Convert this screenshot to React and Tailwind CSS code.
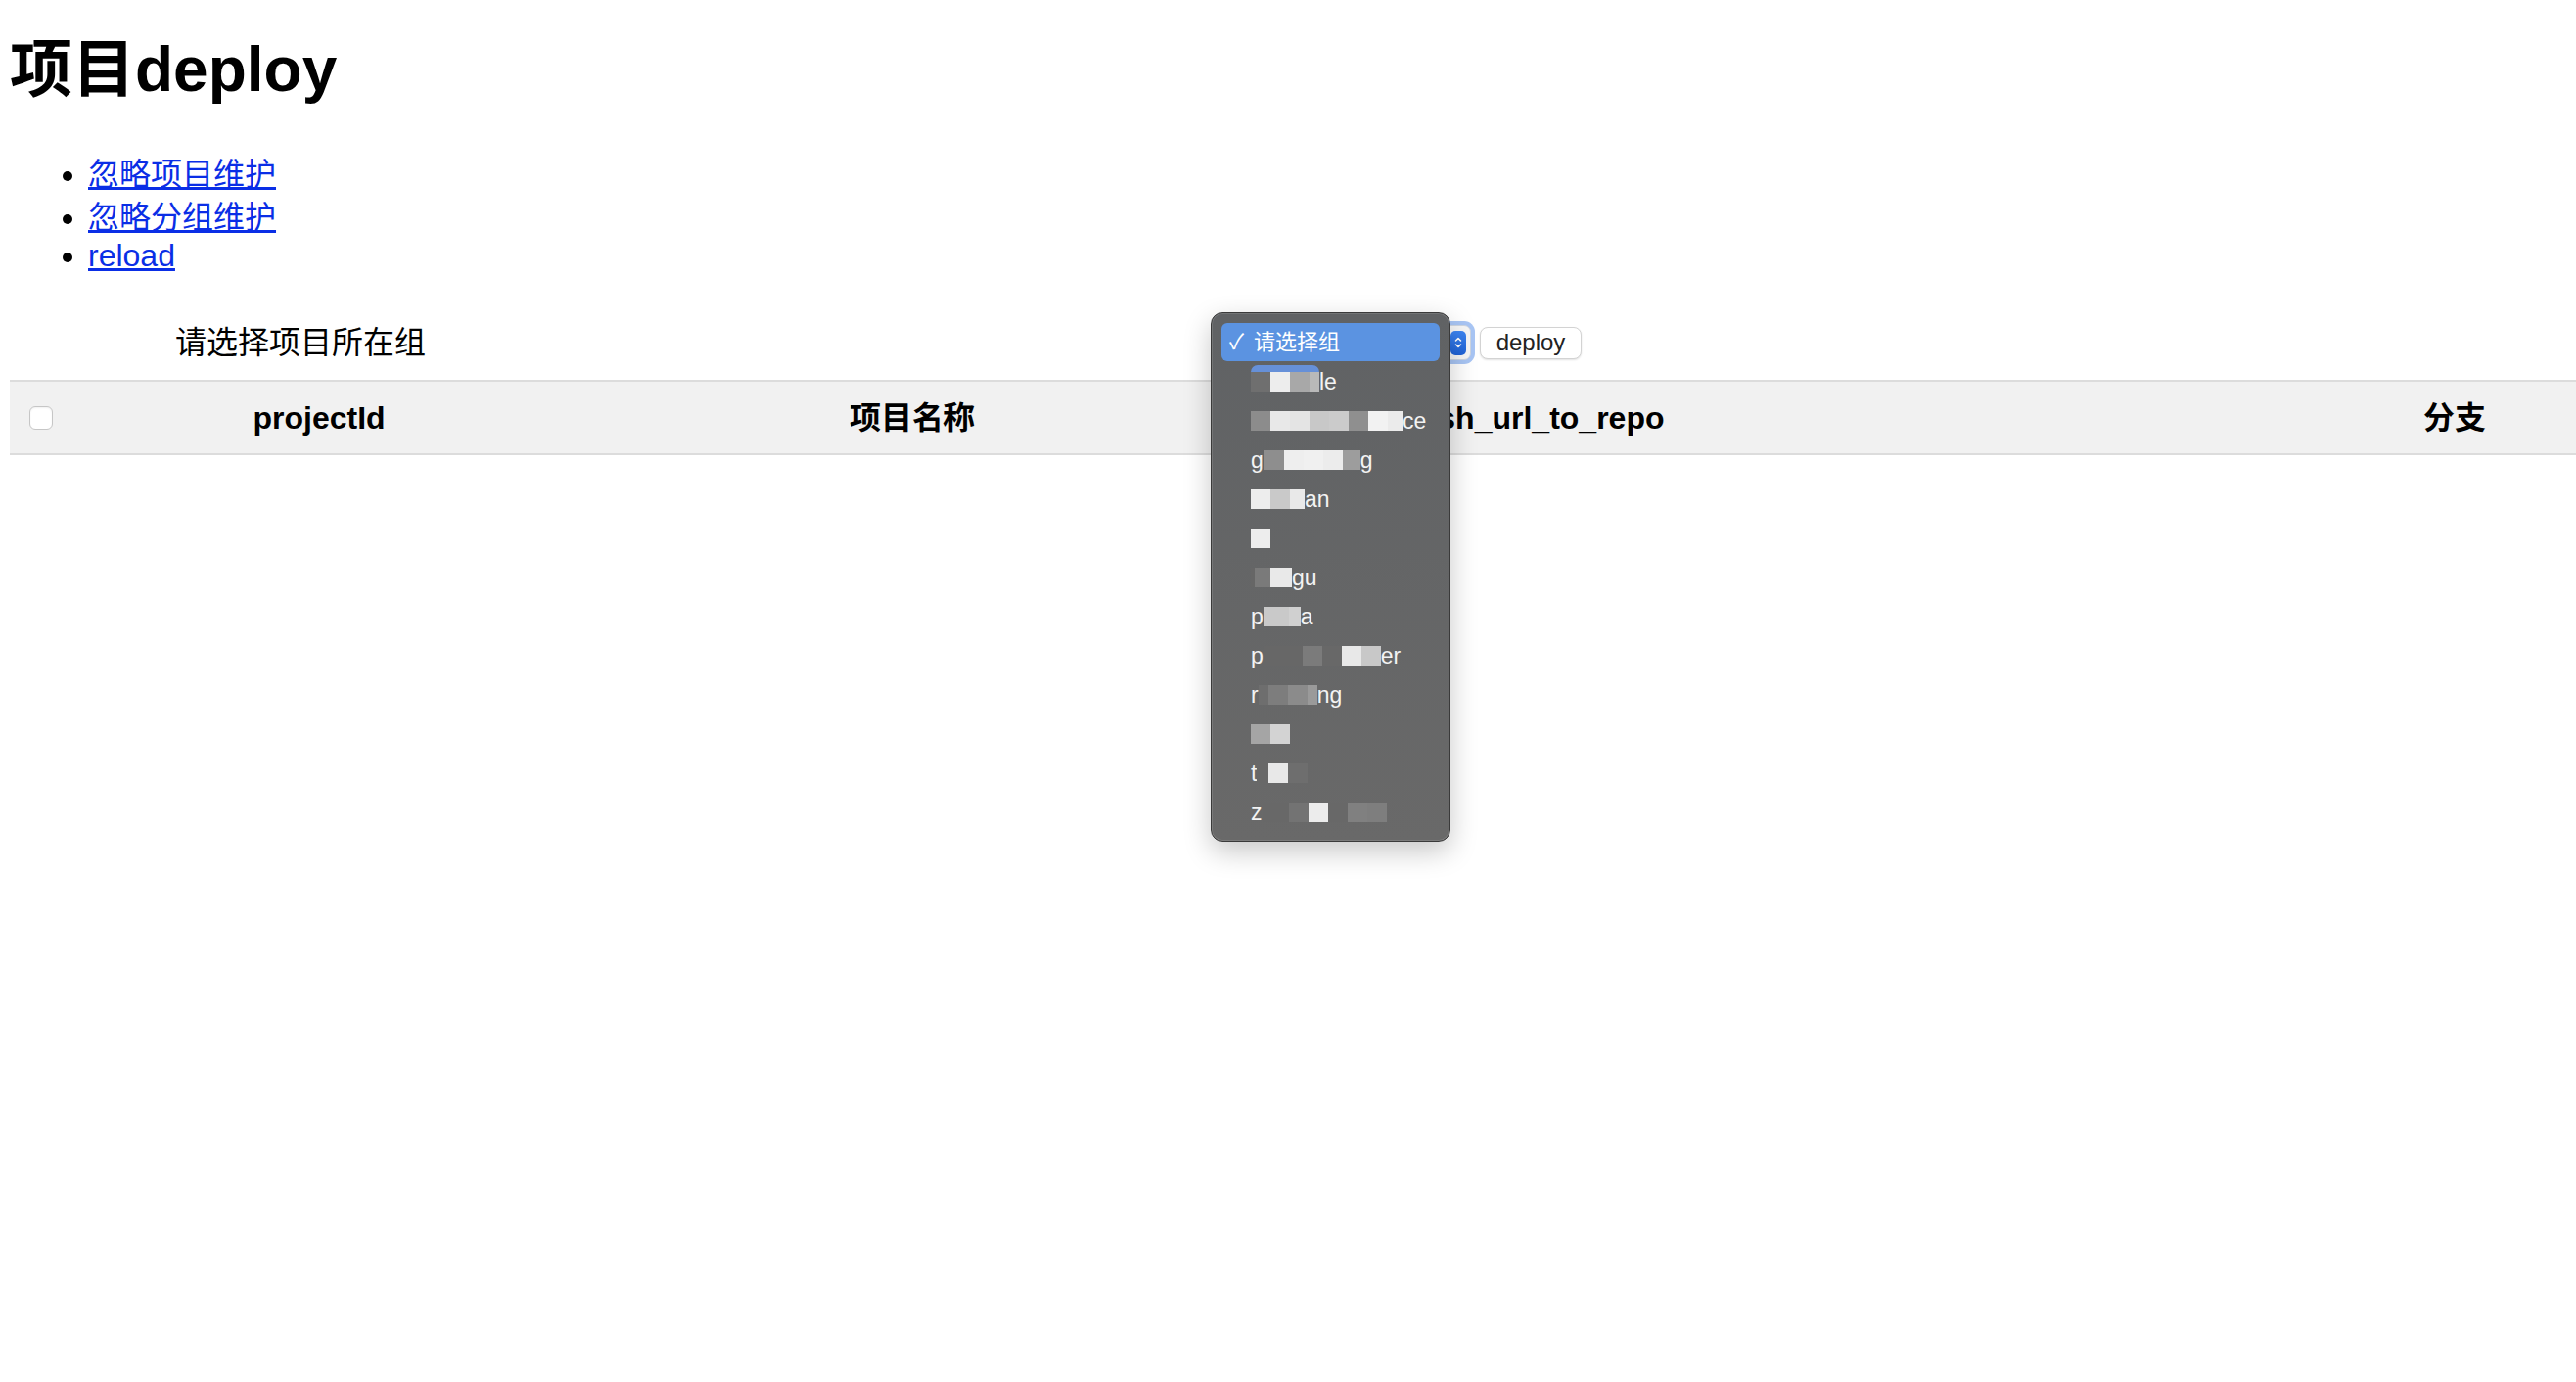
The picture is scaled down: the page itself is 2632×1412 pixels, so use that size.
import React from "react";

// mosaic-blurred option rows of the open native select (x grid of 20px cells)
const OPTIONS = [
  { arc: true, segs: [["#6f6f6f", 20], ["#ededed", 20], ["#a8a8a8", 20], ["#b9b9b9", 10], "le"] },
  { segs: [["#8c8c8c", 20], ["#e8e8e8", 20], ["#e4e4e4", 20], ["#c8c8c8", 20], ["#cbcbcb", 20], ["#8f8f8f", 20], ["#f2f2f2", 20], ["#ebebeb", 15], "ce"] },
  { segs: ["g", ["#8e8e8e", 21], ["#eeeeee", 20], ["#f0f0f0", 20], ["#ececec", 20], ["#9d9d9d", 18], "g"] },
  { segs: [["#ededed", 20], ["#c9c9c9", 20], ["#e9e9e9", 15], "an"] },
  { segs: [["#ededed", 20]] },
  { segs: [["#666666", 4], ["#7a7a7a", 16], ["#e9e9e9", 22], "gu"] },
  { segs: ["p", ["#c9c9c9", 26], ["#d0d0d0", 12], "a"] },
  { segs: ["p", ["#676767", 40], ["#7b7b7b", 20], ["#686868", 20], ["#e8e8e8", 20], ["#c8c8c8", 20], "er"] },
  { segs: ["r", ["#6e6e6e", 10], ["#7d7d7d", 20], ["#8b8b8b", 20], ["#9a9a9a", 10], "ng"] },
  { segs: [["#a5a5a5", 20], ["#d3d3d3", 20]] },
  { segs: ["t", ["#686868", 12], ["#e8e8e8", 20], ["#6e6e6e", 20]] },
  { segs: ["z", ["#686868", 27], ["#737373", 20], ["#ececec", 20], ["#686868", 20], ["#808080", 20], ["#7e7e7e", 20]] },
];

function Segments({ segs }) {
  return segs.map((s, i) =>
    typeof s === "string" ? (
      <span key={i} className="text-[23px] leading-[20px] text-[#f3f3f3]">
        {s}
      </span>
    ) : (
      <span
        key={i}
        className="block h-[20px] shrink-0"
        style={{ width: s[1], backgroundColor: s[0] }}
      />
    )
  );
}

function SelectPopup() {
  return (
    <div className="absolute left-[1237px] top-[319px] w-[245px] h-[541px] rounded-[12px] border border-[#3a3a3a] bg-gradient-to-b from-[#606264] to-[#696969] px-[10px] pt-[10px] shadow-[0_10px_28px_rgba(0,0,0,0.22),inset_0_0_0_1px_rgba(255,255,255,0.12)]">
      {/* selected option */}
      <div className="flex items-center h-[39px] mb-[1px] rounded-[6px] bg-[#5b93e1] pl-[8px] text-white text-[22px]">
        <span className="w-[25px]">✓</span>
        <span>请选择组</span>
      </div>
      {OPTIONS.map((opt, i) => (
        <div key={i} className="flex items-center h-[40px] pl-[30px]">
          {opt.arc ? (
            <>
              <div className="flex flex-col -mt-[7px]">
                <div className="h-[7px] w-[70px] rounded-t-full bg-[#6690d8]" />
                <div className="flex">
                  <Segments segs={opt.segs.slice(0, 4)} />
                </div>
              </div>
              <Segments segs={opt.segs.slice(4)} />
            </>
          ) : (
            <Segments segs={opt.segs} />
          )}
        </div>
      ))}
    </div>
  );
}

export default function App() {
  return (
    <div className="relative w-full min-h-screen overflow-hidden bg-white pl-[10px] text-black font-['Liberation_Sans','Noto_Sans_CJK_SC',sans-serif]">
      <h1 className="mt-[34px] text-[64px] leading-[74px] font-bold">项目deploy</h1>

      <ul className="mt-[48px] list-disc pl-[80px] text-[32px]">
        <li className="leading-[44px]">
          <a href="#" className="text-[#0a2ee6] underline">忽略项目维护</a>
        </li>
        <li className="leading-[44px]">
          <a href="#" className="text-[#0a2ee6] underline">忽略分组维护</a>
        </li>
        <li className="leading-[34px]">
          <a href="#" className="text-[#0a2ee6] underline">reload</a>
        </li>
      </ul>

      {/* group picker row */}
      <div className="mt-[50px] flex items-center h-[44px]">
        <label className="ml-[169px] text-[32px] leading-[44px]">请选择项目所在组</label>
        <div className="ml-[811px] rounded-[11px] bg-[#a8c5f4] p-[4px]">
          <div className="flex items-center justify-end w-[253px] h-[36px] rounded-[7px] border border-[#cdd5e1] bg-[#f6f6f6] pr-[4px]">
            <div className="flex items-center justify-center w-[16px] h-[25px] rounded-[5px] bg-gradient-to-b from-[#3d85f2] to-[#1f62d6]">
              <svg width="8" height="14" viewBox="0 0 8 14" fill="none">
                <path d="M1.5 5 L4 2.5 L6.5 5" stroke="white" strokeWidth="1.6" strokeLinecap="round" strokeLinejoin="round" />
                <path d="M1.5 9 L4 11.5 L6.5 9" stroke="white" strokeWidth="1.6" strokeLinecap="round" strokeLinejoin="round" />
              </svg>
            </div>
          </div>
        </div>
        <button className="ml-[5px] w-[104px] h-[33px] rounded-[8px] border border-[#d3d3d3] bg-white text-[24px] leading-none text-[#222] shadow-[0_1px_2px_rgba(0,0,0,0.12)]">
          deploy
        </button>
      </div>

      <table className="mt-[16px] w-[3140px] table-fixed border-collapse">
        <colgroup>
          <col className="w-[64px]" />
          <col className="w-[504px]" />
          <col className="w-[708px]" />
          <col className="w-[580px]" />
          <col className="w-[1284px]" />
        </colgroup>
        <thead>
          <tr className="bg-[#f1f1f1] border-y-2 border-[#dcdcdc]">
            <th className="h-[75px] p-0">
              <div className="mx-auto w-[24px] h-[24px] rounded-[6px] border border-[#c6c6c6] bg-white shadow-[inset_0_1px_2px_rgba(0,0,0,0.06)]" />
            </th>
            <th className="h-[75px] p-0 text-[32px] font-bold">projectId</th>
            <th className="h-[75px] p-0 text-[32px] font-bold">项目名称</th>
            <th className="h-[75px] p-0 text-[32px] font-bold">ssh_url_to_repo</th>
            <th className="h-[75px] p-0 text-[32px] font-bold">分支</th>
          </tr>
        </thead>
        <tbody />
      </table>

      <SelectPopup />
    </div>
  );
}
